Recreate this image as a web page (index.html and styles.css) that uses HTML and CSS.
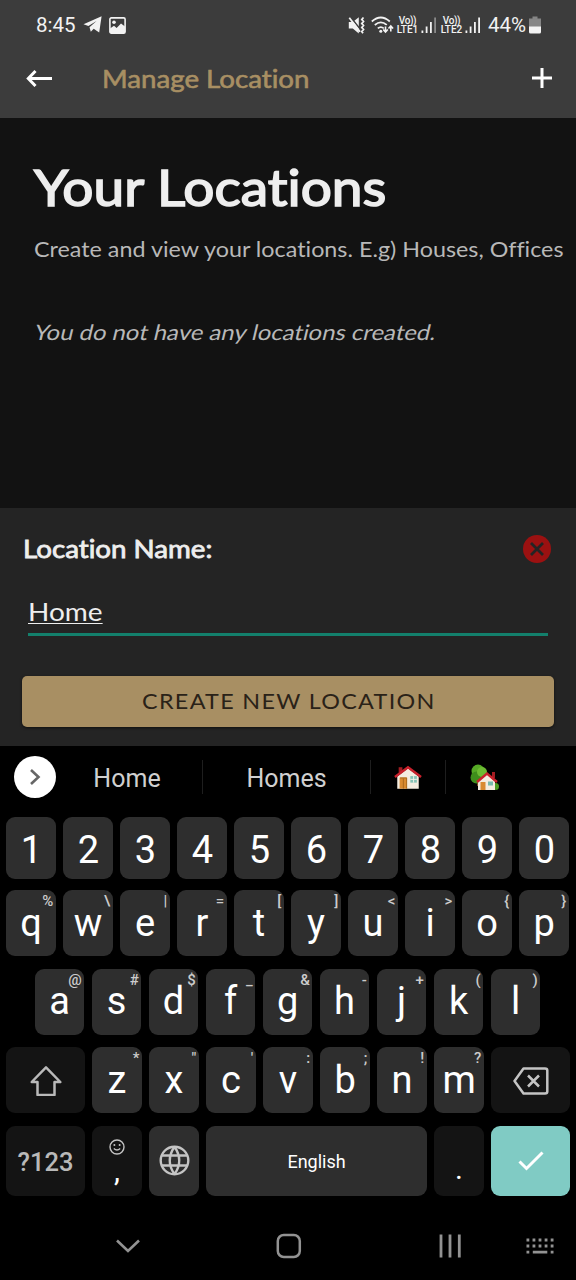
FILE: index.html
```html
<!DOCTYPE html>
<html lang="en">
<head>
<meta charset="utf-8">
<title>Manage Location</title>
<link rel="stylesheet" href="styles.css">
</head>
<body>
<div class="screen">
  <header class="top">
    <div class="status">
      <span class="clock">8:45</span>
      <svg class="telegram" width="20" height="18" viewBox="0 0 20 18"><path fill="#f2f2f2" d="M.5 8.300 18.600.3 16.200 16.600 10.700 12.800 7.800 15.800 6.500 11.200 13.500 5 5.400 9.900Z"/></svg>
      <svg class="photo" width="17" height="17" viewBox="0 0 17 17"><rect x=".9" y=".9" width="15.200" height="15.200" rx="1.400" fill="none" stroke="#f2f2f2" stroke-width="1.600"/><circle cx="5" cy="5.300" r="1.800" fill="#f2f2f2"/><path fill="#f2f2f2" d="M1 11.500 5 8.700 7.600 11 12 6.500 16 9.600V16H1Z"/></svg>
      <span class="spacer"></span>
      <svg class="mute" width="18" height="19" viewBox="0 0 18 19"><path fill="#f2f2f2" d="M.8 6h4l6-4.800v16.300l-6-5h-4Z"/><path d="M2.500 1 12.500 13.500" stroke="#3c3c3c" stroke-width="1.500"/><path d="M1.300 1.800 12 15.800M15.500 1.500l-1.700 2 1.700 2-1.700 2 1.700 2-1.700 2 1.700 2-1.700 2 1.200 1.800" fill="none" stroke="#f2f2f2" stroke-width="1.800"/></svg>
      <svg class="wifi" width="23" height="19" viewBox="0 0 23 19"><g fill="none" stroke="#f2f2f2" stroke-width="1.700"><path d="M.8 5.500q9-8 18 0M3.800 9q6-5.200 12 0M6.800 12.400q3-2.600 6 0"/><path d="M14.500 9.500v6M12.200 13.300l2.300 2.500 2.300-2.500M19.800 16v-6M17.500 12.200l2.300-2.500 2.300 2.500" stroke="#3c3c3c" stroke-width="3"/><path d="M14.500 10.500v5.300M12.200 13.500l2.300 2.500 2.300-2.500M19.800 15.500v-5M17.500 12.500l2.300-2.500 2.300 2.500" stroke-width="1.600"/></g><circle cx="9.800" cy="15.300" r="1.500" fill="#f2f2f2"/></svg>
      <span class="lte"><span class="vo">Vo))</span><span>LTE1</span></span>
      <svg class="bars" width="16" height="17" viewBox="0 0 16 17" fill="#f2f2f2"><path d="M.5 13.500h1.800V16H.5zM4.700 9.500h1.800V16H4.700zM9 5h1.800v11H9z"/><path fill="#8a8a8a" d="M13.200.5H15V16h-1.800z"/></svg>
      <span class="lte lte-2"><span class="vo">Vo))</span><span>LTE2</span></span>
      <svg class="bars" width="16" height="17" viewBox="0 0 16 17" fill="#f2f2f2"><path d="M.5 13.500h1.800V16H.5zM4.700 9.500h1.800V16H4.700zM9 5h1.800v11H9zM13.200.5H15V16h-1.800z"/></svg>
      <span class="percent">44%</span>
      <svg class="battery" width="12" height="18" viewBox="0 0 12 18"><path fill="#858585" d="M3.500.5h5v2H12V11H0V2.500h3.500z"/><path fill="#f2f2f2" d="M0 10.500h12V16q0 1.500-1.500 1.500h-9Q0 17.500 0 16z"/></svg>
    </div>
    <div class="appbar">
      <svg class="back" width="28" height="20" viewBox="0 0 28 20"><path d="M9.500 3 2.300 10.500 9.500 18M2.500 10.500H26" fill="none" stroke="#fff" stroke-width="3"/></svg>
      <h1 class="bar-title"><span class="wide fit-title">Manage Location</span></h1>
      <svg class="add" width="20" height="20" viewBox="0 0 20 20"><path d="M10 0v20M0 10h20" stroke="#fff" stroke-width="3"/></svg>
    </div>
  </header>

  <main class="content">
    <h2 class="heading"><span class="wide fit-heading">Your Locations</span></h2>
    <p class="sub"><span class="wide fit-sub">Create and view your locations. E.g) Houses, Offices</span></p>
    <p class="empty"><span class="wide fit-empty">You do not have any locations created.</span></p>
  </main>

  <section class="panel">
    <div class="panel-head">
      <span class="label"><span class="wide fit-label">Location Name:</span></span>
      <svg width="28" height="28" viewBox="0 0 28 28"><circle cx="14" cy="14" r="14" fill="#9b1111"/><path d="m8 8 12 12M20 8 8 20" stroke="#242424" stroke-width="2.800"/></svg>
    </div>
    <div class="field"><span class="wide fit-field">Home</span></div>
    <div class="create"><span class="wide fit-create">CREATE NEW LOCATION</span></div>
  </section>

  <section class="keyboard">
    <div class="suggest">
      <span class="expand"><svg width="14" height="18" viewBox="0 0 14 18"><path d="m3 2 7.500 7L3 16" fill="none" stroke="#666" stroke-width="2.600"/></svg></span>
      <span class="word word-1">Home</span>
      <span class="word word-2">Homes</span>
      <span class="word word-3"><svg width="28" height="25" viewBox="0 0 30 26"><path fill="#a31c22" d="M5 2h4v6H5z"/><path fill="#f4ecdf" d="M3.500 12 15 3l11.500 9v13h-23z"/><path fill="#d98a30" d="M6 13h8v12H6z"/><path fill="none" stroke="#a7671d" d="M6.500 13.500h7V25M10 14v11"/><path fill="#86c2b5" d="M17.500 11.500h7v7h-7z"/><path stroke="#f5f4e9" d="M21 11.500v7M17.500 15h7"/><path fill="none" stroke="#c9202b" stroke-width="2.600" d="M1 12.500 15 2l14 10.500"/></svg></span>
      <span class="word word-4"><svg width="29" height="27" viewBox="0 0 29 27"><path fill="#7b4b20" d="M7 12h4v10H7z"/><circle cx="8" cy="7" r="6.500" fill="#56a925"/><circle cx="6.500" cy="13.500" r="6" fill="#3f8e1c"/><circle cx="12" cy="8" r="5" fill="#6cbb32"/><circle cx="25.500" cy="22.500" r="3.500" fill="#4c9b22"/><path fill="#a31c22" d="M22 8h3v6h-3z"/><path fill="#f4ecdf" d="M8 17.500 17 10l8 7.500V26H8z"/><path fill="#d98a30" d="M10.500 18h5v8h-5z"/><path fill="#77b9ad" d="M18 17.500h5v4h-5z"/><path fill="none" stroke="#c9202b" stroke-width="2.400" d="m7 18 10-8.500L27 18"/></svg></span>
    </div>
    <div class="row row-num">
      <span class="key">1</span><span class="key">2</span><span class="key">3</span><span class="key">4</span><span class="key">5</span><span class="key">6</span><span class="key">7</span><span class="key">8</span><span class="key">9</span><span class="key">0</span>
    </div>
    <div class="row">
      <span class="key">q<i>%</i></span><span class="key">w<i>\</i></span><span class="key">e<i>|</i></span><span class="key">r<i>=</i></span><span class="key">t<i>[</i></span><span class="key">y<i>]</i></span><span class="key">u<i>&lt;</i></span><span class="key">i<i>&gt;</i></span><span class="key">o<i>{</i></span><span class="key">p<i>}</i></span>
    </div>
    <div class="row row-home">
      <span class="key">a<i>@</i></span><span class="key">s<i>#</i></span><span class="key">d<i>$</i></span><span class="key">f<i>_</i></span><span class="key">g<i>&amp;</i></span><span class="key">h<i>-</i></span><span class="key">j<i>+</i></span><span class="key">k<i>(</i></span><span class="key">l<i>)</i></span>
    </div>
    <div class="row">
      <span class="key dark side"><svg width="32" height="31" viewBox="0 0 32 31"><path d="M16 2.300 30.300 17H24.500V30H7.500V17H1.700Z" fill="none" stroke="#b9b9b9" stroke-width="2.500" stroke-linejoin="round"/></svg></span><span class="key">z<i>*</i></span><span class="key">x<i>"</i></span><span class="key">c<i>'</i></span><span class="key">v<i>:</i></span><span class="key">b<i>;</i></span><span class="key">n<i>!</i></span><span class="key">m<i>?</i></span><span class="key dark side del"><svg width="36" height="28" viewBox="0 0 36 28"><path d="M10.500 1.500H32Q34.300 1.500 34.300 3.500V24.500Q34.300 26.500 32 26.500H10.500L1.500 14ZM15 8.500l11 11M26 8.500l-11 11" fill="none" stroke="#c4c4c4" stroke-width="2.500" stroke-linejoin="round"/></svg></span>
    </div>
    <div class="row row-space">
      <span class="key dark side symbols">?123</span>
      <span class="key dark comma"><svg width="16" height="16" viewBox="0 0 16 16"><circle cx="8" cy="8" r="7" fill="none" stroke="#c4c4c4" stroke-width="1.400"/><path d="M4.800 9.500q3.200 3 6.400 0" fill="none" stroke="#c4c4c4" stroke-width="1.300"/><circle cx="5.400" cy="6" r="1" fill="#c4c4c4"/><circle cx="10.600" cy="6" r="1" fill="#c4c4c4"/></svg><span>,</span></span>
      <span class="key"><svg width="31" height="31" viewBox="0 0 31 31"><g fill="none" stroke="#c4c4c4" stroke-width="2.400"><circle cx="15.500" cy="15.500" r="13.800"/><path d="M2.500 10.500h26M2.500 20.500h26M15.500 1.700q-9.500 13.800 0 27.600M15.500 1.700q9.500 13.800 0 27.600"/></g></svg></span>
      <span class="key space">English</span>
      <span class="key dark period">.</span>
      <span class="key side enter"><svg width="26" height="20" viewBox="0 0 26 20"><path d="m1.500 10.500 7 7L24.500 1.500" fill="none" stroke="#fff" stroke-width="3"/></svg></span>
    </div>
  </section>

  <nav class="nav">
    <svg class="nav-hide" width="24" height="14" viewBox="0 0 24 14"><path d="M1 1.500 12 12 23 1.500" fill="none" stroke="#929292" stroke-width="2.600"/></svg>
    <svg class="nav-home" width="26" height="26" viewBox="0 0 26 26"><rect x="1.800" y="2" width="22" height="22" rx="6" fill="none" stroke="#929292" stroke-width="2.500"/></svg>
    <svg class="nav-recent" width="22" height="24" viewBox="0 0 22 24"><path d="M2 .5v23M11 .5v23M20.300.5v23" stroke="#929292" stroke-width="2.800"/></svg>
    <svg class="nav-keys" width="28" height="18" viewBox="0 0 28 18"><path d="M.5 3h28M.5 9h28" stroke="#929292" stroke-width="2.800" stroke-dasharray="2.800 3.250"/><path d="M.5 15.200h2.800M6.800 15.200h14.500M24.700 15.200h2.800" stroke="#929292" stroke-width="2.800"/></svg>
  </nav>
</div>
</body>
</html>
```
FILE: styles.css
```css
* { box-sizing: border-box; }
body { margin: 0; background: #000; }
svg { display: block; flex: none; }
h1, h2, p { margin: 0; font-weight: 400; }

.screen {
  width: 576px;
  height: 1280px;
  display: flex;
  flex-direction: column;
  overflow: hidden;
  font-family: Lato, "Open Sans", sans-serif;
  font-variant-ligatures: none;
}

/* Horizontally widened text */
.wide {
  display: inline-block;
  transform-origin: left center;
  white-space: nowrap;
}
.fit-title { transform: scaleX(1.107); }
.fit-heading { transform: scaleX(1.1); }
.fit-sub { transform: scaleX(1.095); }
.fit-empty { margin-left: 1px; transform: scaleX(1.12) skewX(-12deg); }
.fit-label { transform: scaleX(1.108); }
.fit-field { transform: scaleX(1.12); }
.fit-create { transform: scaleX(1.096); }

/* Status bar and app bar */
.top { height: 118px; background: #3c3c3c; }
.status {
  height: 48px;
  padding: 2px 35px 0 36px;
  display: flex;
  align-items: center;
  color: #f2f2f2;
  font: 20.5px/48px Roboto, sans-serif;
}
.clock { width: 47px; }
.photo { margin-left: 6px; }
.spacer { flex: 1; }
.wifi { margin-left: 5px; }
.lte {
  width: 23px;
  margin-left: 2px;
  display: flex;
  flex-direction: column;
  align-items: center;
  font-size: 10px;
  line-height: 9px;
  font-weight: 500;
}
.vo { letter-spacing: -0.4px; }
.lte-2 { margin-left: 3px; }
.bars { margin-left: 2px; }
.percent { margin-left: 7px; width: 41px; }
.appbar {
  height: 60px;
  padding: 0 24px 0 26px;
  display: flex;
  align-items: center;
}
.bar-title {
  flex: 1;
  margin-left: 48px;
  color: #a88f63;
  font-size: 25px;
  line-height: 30px;
  -webkit-text-stroke: 0.6px #a88f63;
}

/* Page body */
.content {
  height: 390px;
  padding: 39px 0 0 34px;
  background: #121212;
  color: #b8b8b8;
}
.heading { color: #eee; font-size: 50px; line-height: 60px; -webkit-text-stroke: 1.6px #eee; }
.sub { margin-top: 17px; font-size: 21.3px; line-height: 30px; }
.empty { margin-top: 53px; font-size: 21.3px; line-height: 30px; }

/* New location form */
.panel { height: 238px; padding: 25px 22px 0; background: #242424; color: #eee; }
.panel-head {
  height: 32px;
  padding-right: 3px;
  display: flex;
  align-items: center;
  justify-content: space-between;
}
.label { margin: -3px 0 0 1px; font-size: 25px; line-height: 30px; -webkit-text-stroke: 0.8px #eee; }
.field {
  height: 41px;
  margin: 30px 6px 0;
  border-bottom: 3px solid #13806c;
  font-size: 25px;
  line-height: 32px;
}
.field .wide { text-decoration: underline; text-decoration-thickness: 1px; text-underline-offset: 2px; }
.create {
  height: 51px;
  margin-top: 40px;
  padding-left: 120px;
  border-radius: 5px;
  background: #a88f63;
  box-shadow: 0 1px 3px #0009;
  color: #2a2218;
  font-size: 21.3px;
  line-height: 50px;
  letter-spacing: 1.2px;
}

/* Keyboard */
.keyboard { height: 450px; background: #000; color: #fff; font-family: Roboto, sans-serif; }
.suggest { height: 70.5px; padding: 0 14px; display: flex; align-items: center; }
.expand {
  width: 42px;
  height: 42px;
  margin-top: -8px;
  border-radius: 50%;
  background: #fff;
  display: flex;
  align-items: center;
  justify-content: center;
}
.word {
  height: 34px;
  margin-top: -8px;
  display: flex;
  align-items: center;
  justify-content: center;
  color: #d0d0d0;
  font-size: 25px;
  border-right: 1.5px solid #1e1e1e;
}
.word-1 { width: 147px; padding: 2px 4px 0 0; }
.word-2 { width: 168px; padding-top: 2px; }
.word-3 { width: 75px; }
.word-4 { width: 76px; border: 0; }
.row { height: 66px; margin: 0 6px 12.5px 6.3px; display: flex; gap: 7.5px; }
.row-num { height: 62.5px; margin-bottom: 11px; }
.row-home { margin-left: 34.8px; }
.row-space { height: 70px; margin-bottom: 0; }
.key {
  position: relative;
  width: 49.5px;
  height: 100%;
  border-radius: 9px;
  background: #2e2e2e;
  display: flex;
  flex: none;
  align-items: center;
  justify-content: center;
  font-size: 38px;
  line-height: 62px;
}
.row-num .key { padding: 4px 0 0 1px; }
.row-home .key { padding-bottom: 2px; }
.key i {
  position: absolute;
  top: 2px;
  right: 2.5px;
  color: #ccc;
  font-size: 15px;
  line-height: 18px;
  font-style: normal;
  font-weight: 500;
}
.dark { background: #141414; }
.side { width: 78.5px; }
.del svg { margin-top: 2px; }
.symbols { padding-top: 2px; color: #b9b9b9; font-size: 25.5px; font-weight: 500; }
.comma { flex-direction: column; justify-content: flex-start; padding-top: 13px; font-size: 30px; }
.comma span { line-height: 32px; }
.space { width: 220.5px; padding-top: 2px; font-size: 18px; }
.period { font-size: 30px; padding-top: 16px; }
.enter { background: #80cbc4; }

/* System navigation */
.nav { flex: 1; padding: 16px 0 0 116px; display: flex; align-items: center; }
.nav-home { margin-left: 136px; }
.nav-recent { margin-left: 137px; }
.nav-keys { margin-left: 65px; }
```
